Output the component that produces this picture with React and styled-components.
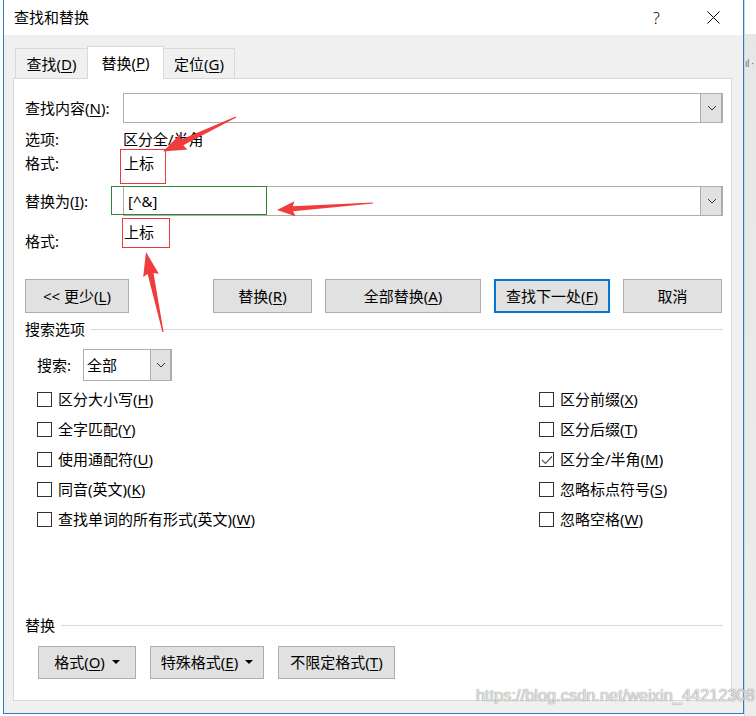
import styled, { createGlobalStyle } from 'styled-components'

const FONT = `"Noto Sans", "Noto Sans CJK SC", sans-serif`

const GlobalStyle = createGlobalStyle`
  html, body { margin: 0; padding: 0; background: #fff; }
  body { font-family: ${FONT}; }
  * { box-sizing: border-box; }
`

const LEFT_OPTIONS = [
  { label: '区分大小写', key: 'H' },
  { label: '全字匹配', key: 'Y' },
  { label: '使用通配符', key: 'U' },
  { label: '同音(英文)', key: 'K' },
  { label: '查找单词的所有形式(英文)', key: 'W' },
]

const RIGHT_OPTIONS = [
  { label: '区分前缀', key: 'X' },
  { label: '区分后缀', key: 'T' },
  { label: '区分全/半角', key: 'M', checked: true },
  { label: '忽略标点符号', key: 'S' },
  { label: '忽略空格', key: 'W' },
]

const ARROWS = [
  { tail: [236, 117], tip: [163, 151.5], head: 21, half: 8.5, neck: 3 },
  { tail: [373, 203], tip: [277, 210], head: 16, half: 7.5, neck: 2.5 },
  { tail: [163, 332], tip: [146, 252], head: 22, half: 8, neck: 3 },
]

function arrowPoints({ tail, tip, head, half, neck }) {
  const dx = tip[0] - tail[0]
  const dy = tip[1] - tail[1]
  const len = Math.hypot(dx, dy)
  const ux = dx / len
  const uy = dy / len
  const nx = -uy
  const ny = ux
  const bx = tip[0] - ux * head
  const by = tip[1] - uy * head
  const p = (x, y, k) => `${(x + nx * k).toFixed(1)},${(y + ny * k).toFixed(1)}`
  return [
    p(tail[0], tail[1], 0.6),
    p(bx, by, neck),
    p(bx - ux * 2, by - uy * 2, half),
    `${tip[0]},${tip[1]}`,
    p(bx - ux * 2, by - uy * 2, -half),
    p(bx, by, -neck),
    p(tail[0], tail[1], -0.6),
  ].join(' ')
}

const Page = styled.div`
  position: relative;
  width: 756px;
  height: 716px;
  display: flex;
  overflow: hidden;
  background: #fff;
  font-family: ${FONT};
  font-size: 15px;
  color: #000;
`

const LeftEdge = styled.div`
  width: 3px;
  background: #fff;
`

const RightEdge = styled.div`
  flex: 1;
  background: linear-gradient(#fff 0, #fff 34px, #e7e7e7 34px, #ededed 100%);
  border-left: 1px solid #d6d6d6;
  padding-top: 56px;
  font-size: 10px;
  letter-spacing: -0.5px;
  color: #777;
  white-space: nowrap;
`

const Window = styled.div`
  width: 741px;
  height: 714px;
  display: flex;
  flex-direction: column;
  border: 1px solid #2b79d0;
  border-top: none;
`

const TitleBar = styled.div`
  height: 35px;
  display: flex;
  align-items: center;
  background: #fff;
  padding-left: 10px;
  line-height: 20px;
`

const Title = styled.div`
  flex: 1;
  padding-bottom: 1px;
`

const CtrlButton = styled.div`
  width: 57px;
  height: 35px;
  display: flex;
  align-items: center;
  justify-content: center;
  font-size: 16px;
  font-weight: 300;
  &:last-child { margin-right: 1px; }
`

const Body = styled.div`
  flex: 1;
  display: flex;
  flex-direction: column;
  background: #f0f0f0;
  padding: 11px 11px 12px 9px;
`

const Tabs = styled.div`
  display: flex;
  align-items: flex-end;
  height: 33px;
  margin-bottom: -1px;
  padding-left: 2px;
  position: relative;
  z-index: 1;
`

const Tab = styled.div`
  width: ${({ $w }) => $w}px;
  height: ${({ $active }) => ($active ? 33 : 31)}px;
  margin-left: ${({ $first }) => ($first ? 0 : -1)}px;
  display: flex;
  align-items: center;
  justify-content: center;
  padding-bottom: ${({ $active }) => ($active ? 2 : 0)}px;
  background: ${({ $active }) => ($active ? '#fff' : '#f0f0f0')};
  border: 1px solid #d9d9d9;
  border-bottom: ${({ $active }) => ($active ? 'none' : '1px solid #d9d9d9')};
  position: relative;
  z-index: ${({ $active }) => ($active ? 2 : 1)};
`

const Panel = styled.div`
  flex: 1;
  display: flex;
  flex-direction: column;
  background: #fff;
  border: 1px solid #d9d9d9;
  padding: 14px 8px 21px 11px;
  line-height: 20px;
`

const FieldRow = styled.div`
  display: flex;
  align-items: ${({ $top }) => ($top ? 'flex-start' : 'center')};
  height: ${({ $h }) => $h}px;
  margin-top: ${({ $mt }) => $mt || 0}px;
`

const Label = styled.div`
  width: 98px;
  flex-shrink: 0;
  margin-top: ${({ $mt }) => $mt || 0}px;
`

const Value = styled.div`
  margin-top: ${({ $mt }) => $mt || 0}px;
  padding-left: ${({ $pl }) => $pl || 0}px;
`

const Combo = styled.div`
  flex: 1;
  height: 30px;
  display: flex;
  border: 1px solid #adadad;
  background: #fff;
`

const ComboText = styled.div`
  flex: 1;
  display: flex;
  align-items: center;
  padding-left: 4px;
`

const DropButton = styled.div`
  width: ${({ $w }) => $w || 22}px;
  display: flex;
  align-items: center;
  justify-content: center;
  background: #e1e1e1;
  border-left: 1px solid #adadad;
  box-shadow: inset -1px 0 0 #adadad;
`

const Chevron = () => (
  <svg width="10" height="6" viewBox="0 0 10 6">
    <path d="M1 1 L5 5 L9 1" fill="none" stroke="#333" strokeWidth="1" />
  </svg>
)

const ButtonRow = styled.div`
  display: flex;
  gap: ${({ $gap }) => $gap}px;
  margin-top: ${({ $mt }) => $mt}px;
  padding-left: ${({ $pl }) => $pl || 0}px;
`

const Button = styled.div`
  width: ${({ $w }) => $w}px;
  height: ${({ $h }) => $h || 34}px;
  margin-right: ${({ $mr }) => $mr || 0}px;
  display: flex;
  align-items: center;
  justify-content: center;
  background: #e1e1e1;
  border: ${({ $default }) => ($default ? '2px solid #0078d7' : '1px solid #adadad')};
  padding-bottom: 1px;
`

const Caret = styled.span`
  display: inline-block;
  width: 0;
  height: 0;
  margin-left: 7px;
  border-left: 4px solid transparent;
  border-right: 4px solid transparent;
  border-top: 4px solid #000;
`

const SectionHeader = styled.div`
  display: flex;
  align-items: center;
  gap: 6px;
  height: 20px;
  margin-top: ${({ $mt }) => $mt}px;
  &::after {
    content: '';
    flex: 1;
    height: 1px;
    background: #dadada;
  }
`

const SearchRow = styled.div`
  display: flex;
  align-items: center;
  height: 32px;
  margin-top: 10px;
  padding-left: 12px;
`

const SearchLabel = styled.div`
  width: 46px;
`

const Select = styled.div`
  width: 89px;
  height: 32px;
  display: flex;
  border: 1px solid #adadad;
`

const SelectText = styled.div`
  flex: 1;
  display: flex;
  align-items: center;
  padding-left: 3px;
`

const CheckGrid = styled.div`
  display: flex;
  margin-top: 3px;
  padding-left: 12px;
`

const CheckColumn = styled.div`
  width: ${({ $w }) => ($w ? `${$w}px` : 'auto')};
  display: flex;
  flex-direction: column;
`

const CheckRow = styled.div`
  height: 30px;
  display: flex;
  align-items: center;
  gap: 6px;
`

const Box = styled.div`
  width: 15px;
  height: 15px;
  border: 1px solid #333;
  background: #fff;
  display: flex;
  align-items: center;
  justify-content: center;
  margin-top: 1px;
`

const Key = styled.u`
  text-underline-offset: 2px;
  text-decoration-thickness: 1px;
`

const Overlay = styled.div`
  position: absolute;
  inset: 0;
  pointer-events: none;
`

const Mark = styled.div`
  position: absolute;
  left: ${({ $x }) => $x}px;
  top: ${({ $y }) => $y}px;
  width: ${({ $w }) => $w}px;
  height: ${({ $h }) => $h}px;
  border: 1px solid ${({ $color }) => $color};
`

const ArrowLayer = styled.svg`
  position: absolute;
  left: 0;
  top: 0;
`

const Watermark = styled.div`
  position: absolute;
  left: 476px;
  top: 685px;
  font-family: "Liberation Sans", Arial, sans-serif;
  font-size: 16.4px;
  line-height: 20px;
  color: rgba(255, 255, 255, 0.8);
  text-shadow: 0 0 1px rgba(0, 0, 0, 0.45), 0 0 1px rgba(0, 0, 0, 0.3);
  white-space: nowrap;
`

function Option({ label, k, checked }) {
  return (
    <CheckRow>
      <Box>
        {checked && (
          <svg width="12" height="10" viewBox="0 0 12 10">
            <path d="M1 5 L4.5 8.5 L11 1.5" fill="none" stroke="#555" strokeWidth="1.2" />
          </svg>
        )}
      </Box>
      <span>{label}(<Key>{k}</Key>)</span>
    </CheckRow>
  )
}

export default function App() {
  return (
    <Page>
      <GlobalStyle />
      <LeftEdge />
      <Window>
        <TitleBar>
          <Title>查找和替换</Title>
          <CtrlButton>?</CtrlButton>
          <CtrlButton>
            <svg width="13" height="13" viewBox="0 0 13 13">
              <path d="M0.5 0.5 L12.5 12.5 M12.5 0.5 L0.5 12.5" stroke="#000" strokeWidth="1" />
            </svg>
          </CtrlButton>
        </TitleBar>
        <Body>
          <Tabs>
            <Tab $w={73} $first>查找(<Key>D</Key>)</Tab>
            <Tab $w={77} $active>替换(<Key>P</Key>)</Tab>
            <Tab $w={72}>定位(<Key>G</Key>)</Tab>
          </Tabs>
          <Panel>
            <FieldRow $h={30}>
              <Label>查找内容(<Key>N</Key>):</Label>
              <Combo>
                <ComboText />
                <DropButton><Chevron /></DropButton>
              </Combo>
            </FieldRow>
            <FieldRow $h={24} $mt={4}>
              <Label>选项:</Label>
              <Value>区分全/半角</Value>
            </FieldRow>
            <FieldRow $h={24}>
              <Label>格式:</Label>
              <Value $pl={1}>上标</Value>
            </FieldRow>
            <FieldRow $h={30} $mt={11}>
              <Label>替换为(<Key>I</Key>):</Label>
              <Combo>
                <ComboText>[^&amp;]</ComboText>
                <DropButton><Chevron /></DropButton>
              </Combo>
            </FieldRow>
            <FieldRow $h={40} $top>
              <Label $mt={15}>格式:</Label>
              <Value $mt={6} $pl={1}>上标</Value>
            </FieldRow>

            <ButtonRow $gap={13} $mt={23}>
              <Button $w={104} $mr={71}>&lt;&lt; 更少(<Key>L</Key>)</Button>
              <Button $w={99}>替换(<Key>R</Key>)</Button>
              <Button $w={156}>全部替换(<Key>A</Key>)</Button>
              <Button $w={116} $default>查找下一处(<Key>F</Key>)</Button>
              <Button $w={99}>取消</Button>
            </ButtonRow>

            <SectionHeader $mt={6}>搜索选项</SectionHeader>
            <SearchRow>
              <SearchLabel>搜索:</SearchLabel>
              <Select>
                <SelectText>全部</SelectText>
                <DropButton $w={21}><Chevron /></DropButton>
              </Select>
            </SearchRow>

            <CheckGrid>
              <CheckColumn $w={502}>
                {LEFT_OPTIONS.map((o) => <Option key={o.label} label={o.label} k={o.key} />)}
              </CheckColumn>
              <CheckColumn>
                {RIGHT_OPTIONS.map((o) => <Option key={o.label} label={o.label} k={o.key} checked={o.checked} />)}
              </CheckColumn>
            </CheckGrid>

            <SectionHeader $mt={81}>替换</SectionHeader>
            <ButtonRow $gap={14} $mt={11} $pl={13}>
              <Button $w={98} $h={33}>格式(<Key>O</Key>)<Caret /></Button>
              <Button $w={114} $h={33}>特殊格式(<Key>E</Key>)<Caret /></Button>
              <Button $w={117} $h={33}>不限定格式(<Key>T</Key>)</Button>
            </ButtonRow>
          </Panel>
        </Body>
      </Window>
      <RightEdge>ıl ·</RightEdge>

      <Overlay>
        <Mark $x={120} $y={149} $w={46} $h={35} $color="#e83a3a" />
        <Mark $x={111} $y={186} $w={156} $h={29} $color="#2f8a2f" />
        <Mark $x={122} $y={218} $w={48} $h={30} $color="#e83a3a" />
        <ArrowLayer width="756" height="716" viewBox="0 0 756 716">
          {ARROWS.map((a, i) => (
            <polygon key={i} points={arrowPoints(a)} fill="#f03c3c" />
          ))}
        </ArrowLayer>
        <Watermark>https://blog.csdn.net/weixin_44212308</Watermark>
      </Overlay>
    </Page>
  )
}
